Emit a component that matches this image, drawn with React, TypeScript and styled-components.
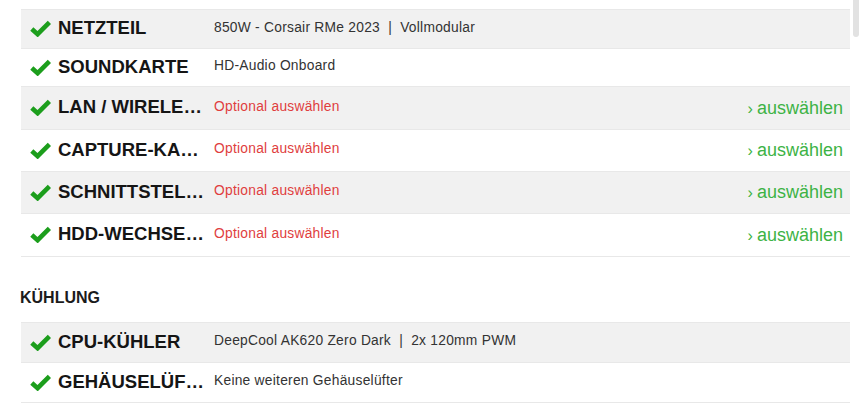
import * as React from 'react';
import styled, { createGlobalStyle } from 'styled-components';

const GlobalStyle = createGlobalStyle`
  html, body {
    margin: 0;
    padding: 0;
    background: #fff;
    font-family: "Liberation Sans", Arial, sans-serif;
    overflow: hidden;
  }
`;

const Page = styled.div`
  padding: 9px 10px 0 21px;
  width: 860px;
  height: 412px;
  box-sizing: border-box;
  overflow: hidden;
`;

const List = styled.div`
  display: flex;
  flex-direction: column;
  border-top: 1px solid #e8e8e8;
`;

const Row = styled.div<{ $shaded?: boolean; $height?: number }>`
  display: flex;
  align-items: center;
  height: ${(p) => p.$height ?? 42}px;
  box-sizing: border-box;
  padding: 0 7px 0 9px;
  background: ${(p) => (p.$shaded ? '#f1f1f1' : '#fff')};
  border-bottom: 1px solid #e8e8e8;
`;

const CheckBox = styled.div`
  display: flex;
  flex-shrink: 0;
  width: 21px;
  margin-right: 7px;
  margin-bottom: 1px;
`;

const Label = styled.div`
  width: 147px;
  flex-shrink: 0;
  margin-right: 9px;
  margin-bottom: 2px;
  font-size: 18.5px;
  font-weight: bold;
  color: #151515;
  white-space: nowrap;
  overflow: hidden;
  text-overflow: ellipsis;
`;

const Value = styled.div<{ $optional?: boolean }>`
  flex: 1;
  font-size: 13.8px;
  letter-spacing: 0.25px;
  color: ${(p) => (p.$optional ? '#e03e3e' : '#333')};
  white-space: pre;
  overflow: hidden;
  margin-bottom: 4px;
`;

const Select = styled.a`
  display: flex;
  align-items: baseline;
  gap: 4px;
  color: #3db345;
  font-size: 18px;
  text-decoration: none;
  cursor: pointer;
`;

const Chevron = styled.span`
  font-size: 16px;
`;

const SectionTitle = styled.div`
  margin: 31px 0 14px -1px;
  font-size: 16px;
  line-height: 20px;
  font-weight: bold;
  color: #1b1b1b;
`;

const ScrollThumb = styled.div`
  position: fixed;
  top: 0;
  right: 1px;
  width: 6px;
  height: 37px;
  border-radius: 0 0 3px 3px;
  background: #e2e2e2;
`;

const Check = () => (
  <svg width="21" height="17" viewBox="0 0 21 17">
    <path d="M1.8 9 L7.6 14.2 L19.4 2.4" fill="none" stroke="#1c9e1c" strokeWidth="4.6" />
  </svg>
);

type Item = { label: string; value: string; optional?: boolean; height: number };

const Komponenten: Item[] = [
  { label: 'NETZTEIL', value: '850W - Corsair RMe 2023  |  Vollmodular', height: 39 },
  { label: 'SOUNDKARTE', value: 'HD-Audio Onboard', height: 38 },
  { label: 'LAN / WIRELESS', value: 'Optional auswählen', optional: true, height: 43 },
  { label: 'CAPTURE-KARTE', value: 'Optional auswählen', optional: true, height: 42 },
  { label: 'SCHNITTSTELLEN', value: 'Optional auswählen', optional: true, height: 42 },
  { label: 'HDD-WECHSELRAHMEN', value: 'Optional auswählen', optional: true, height: 43 },
];

const Kuehlung: Item[] = [
  { label: 'CPU-KÜHLER', value: 'DeepCool AK620 Zero Dark  |  2x 120mm PWM', height: 40 },
  { label: 'GEHÄUSELÜFTER', value: 'Keine weiteren Gehäuselüfter', height: 40 },
];

const ItemRow = ({ item, index }: { item: Item; index: number }) => (
  <Row $shaded={index % 2 === 0} $height={item.height}>
    <CheckBox>
      <Check />
    </CheckBox>
    <Label>{item.label}</Label>
    <Value $optional={item.optional}>{item.value}</Value>
    {item.optional && (
      <Select>
        <Chevron>›</Chevron>auswählen
      </Select>
    )}
  </Row>
);

export default function App() {
  return (
    <>
      <GlobalStyle />
      <Page>
        <List>
          {Komponenten.map((item, i) => (
            <ItemRow key={item.label} item={item} index={i} />
          ))}
        </List>
        <SectionTitle>KÜHLUNG</SectionTitle>
        <List>
          {Kuehlung.map((item, i) => (
            <ItemRow key={item.label} item={item} index={i} />
          ))}
        </List>
      </Page>
      <ScrollThumb />
    </>
  );
}
